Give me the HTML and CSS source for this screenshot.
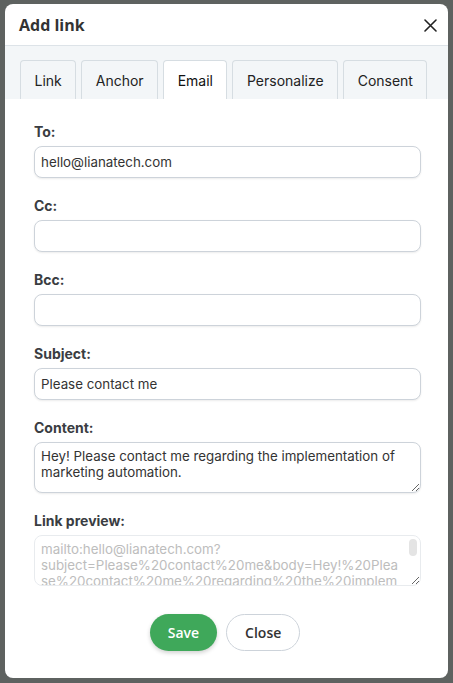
FILE: index.html
```html
<!DOCTYPE html>
<html lang="en">
<head>
    <meta charset="UTF-8">
    <meta name="viewport" content="width=device-width, initial-scale=1.0">
    <title>Add link</title>
    <link rel="stylesheet" href="styles.css">
</head>
<body>
    <div class="modal">
        <div class="modal-header">
            <h2>Add link</h2>
            <button class="close-x" aria-label="Close">
                <svg width="13" height="13" viewBox="0 0 13 13"><path d="M1 1L12 12M12 1L1 12" stroke="#222" stroke-width="1.6" stroke-linecap="round"/></svg>
            </button>
        </div>

        <div class="tabs">
            <div class="tab">Link</div>
            <div class="tab">Anchor</div>
            <div class="tab active">Email</div>
            <div class="tab">Personalize</div>
            <div class="tab">Consent</div>
        </div>

        <form class="modal-body">
            <div class="form-group">
                <label for="to">To:</label>
                <input type="text" id="to" value="hello@lianatech.com">
            </div>
            <div class="form-group">
                <label for="cc">Cc:</label>
                <input type="text" id="cc">
            </div>
            <div class="form-group">
                <label for="bcc">Bcc:</label>
                <input type="text" id="bcc">
            </div>
            <div class="form-group">
                <label for="subject">Subject:</label>
                <input type="text" id="subject" value="Please contact me">
            </div>
            <div class="form-group">
                <label for="content">Content:</label>
                <textarea id="content">Hey! Please contact me regarding the implementation of marketing automation.</textarea>
            </div>
            <div class="form-group">
                <label for="preview">Link preview:</label>
                <div class="preview-wrap">
                    <textarea id="preview" class="preview" disabled>mailto:hello@lianatech.com?subject=Please%20contact%20me&amp;body=Hey!%20Please%20contact%20me%20regarding%20the%20implementation%20of%20marketing%20automation.</textarea>
                    <span class="scroll-thumb"></span>
                </div>
            </div>

            <div class="actions">
                <button type="button" class="btn btn-save">Save</button>
                <button type="button" class="btn btn-close">Close</button>
            </div>
        </form>
    </div>
</body>
</html>
```

FILE: styles.css
```css
html, body {
    height: 100%;
}
body {
    margin: 0;
    padding: 4px 5px 5px;
    box-sizing: border-box;
    background-color: #5e6260;
    font-family: Inter, "Liberation Sans", sans-serif;
    color: #333;
}
.modal {
    height: 674px;
    background-color: #ffffff;
    border-radius: 8px;
    overflow: hidden;
    display: flex;
    flex-direction: column;
}
.modal-header {
    height: 41px;
    display: flex;
    align-items: center;
    justify-content: space-between;
    padding: 0 11px 0 14px;
    border-bottom: 1px solid #dde3e8;
}
.modal-header h2 {
    margin: 0;
    font-family: "Open Sans", sans-serif;
    font-size: 16px;
    font-weight: 700;
    color: #333;
    padding-top: 1px;
}
.close-x {
    background: none;
    border: none;
    padding: 0;
    width: 13px;
    height: 13px;
    margin-top: 2px;
    display: flex;
}
.tabs {
    display: flex;
    gap: 5px;
    padding: 14px 15px 0;
    background-color: #f3f6f8;
    height: 53px;
    box-sizing: border-box;
}
.tab {
    height: 39px;
    padding: 0 13.5px;
    display: flex;
    align-items: center;
    font-size: 14px;
    color: #222;
    border: 1px solid #d6dde2;
    border-bottom: none;
    border-radius: 4px 4px 0 0;
    box-sizing: border-box;
    background-color: #f3f6f8;
}
.tab.active {
    background-color: #ffffff;
    color: #111;
}
.modal-body {
    padding: 24px 27px 27px 29px;
    flex: 1;
    display: flex;
    flex-direction: column;
}
.form-group {
    margin-bottom: 19px;
}
.form-group:last-of-type {
    margin-bottom: 0;
}
label {
    display: block;
    font-size: 14px;
    font-weight: 700;
    color: #3a3d42;
    margin-bottom: 6px;
    line-height: 17px;
}
input[type="text"],
textarea {
    display: block;
    width: 100%;
    box-sizing: border-box;
    border: 1px solid #cdd3da;
    border-radius: 8px;
    font-family: Inter, "Liberation Sans", sans-serif;
    font-size: 13.33px;
    color: #333;
    background-color: #fff;
    box-shadow: 0 1px 2px rgba(0, 0, 0, 0.08);
    margin: 0;
}
input[type="text"] {
    height: 32px;
    padding: 0 6px;
}
textarea {
    height: 51px;
    padding: 5px 6px;
    line-height: 16px;
    resize: vertical;
}

/* preview box, with a drawn scrollbar thumb */
.preview-wrap {
    position: relative;
}
textarea.preview {
    color: #bdbdbd;
    background-color: #fff;
    border-color: #e8ebee;
    box-shadow: none;
    padding-right: 20px;
    overflow: hidden;
}
.scroll-thumb {
    position: absolute;
    top: 4px;
    right: 4px;
    width: 8px;
    height: 17px;
    border-radius: 4px;
    background-color: #e4e4e4;
}
.actions {
    margin-top: auto;
    margin-right: 5px;
    display: flex;
    justify-content: center;
    gap: 9px;
}
.btn {
    height: 37px;
    border-radius: 19px;
    font-family: "Open Sans", sans-serif;
    font-size: 14px;
    font-weight: 600;
    padding: 0 18px;
    cursor: pointer;
}
.btn-save {
    background-color: #3fa85a;
    color: #fff;
    border: none;
    box-shadow: 0 2px 4px rgba(0, 0, 0, 0.18);
}
.btn-close {
    background-color: #fff;
    color: #333;
    border: 1px solid #cdd3da;
}
```
